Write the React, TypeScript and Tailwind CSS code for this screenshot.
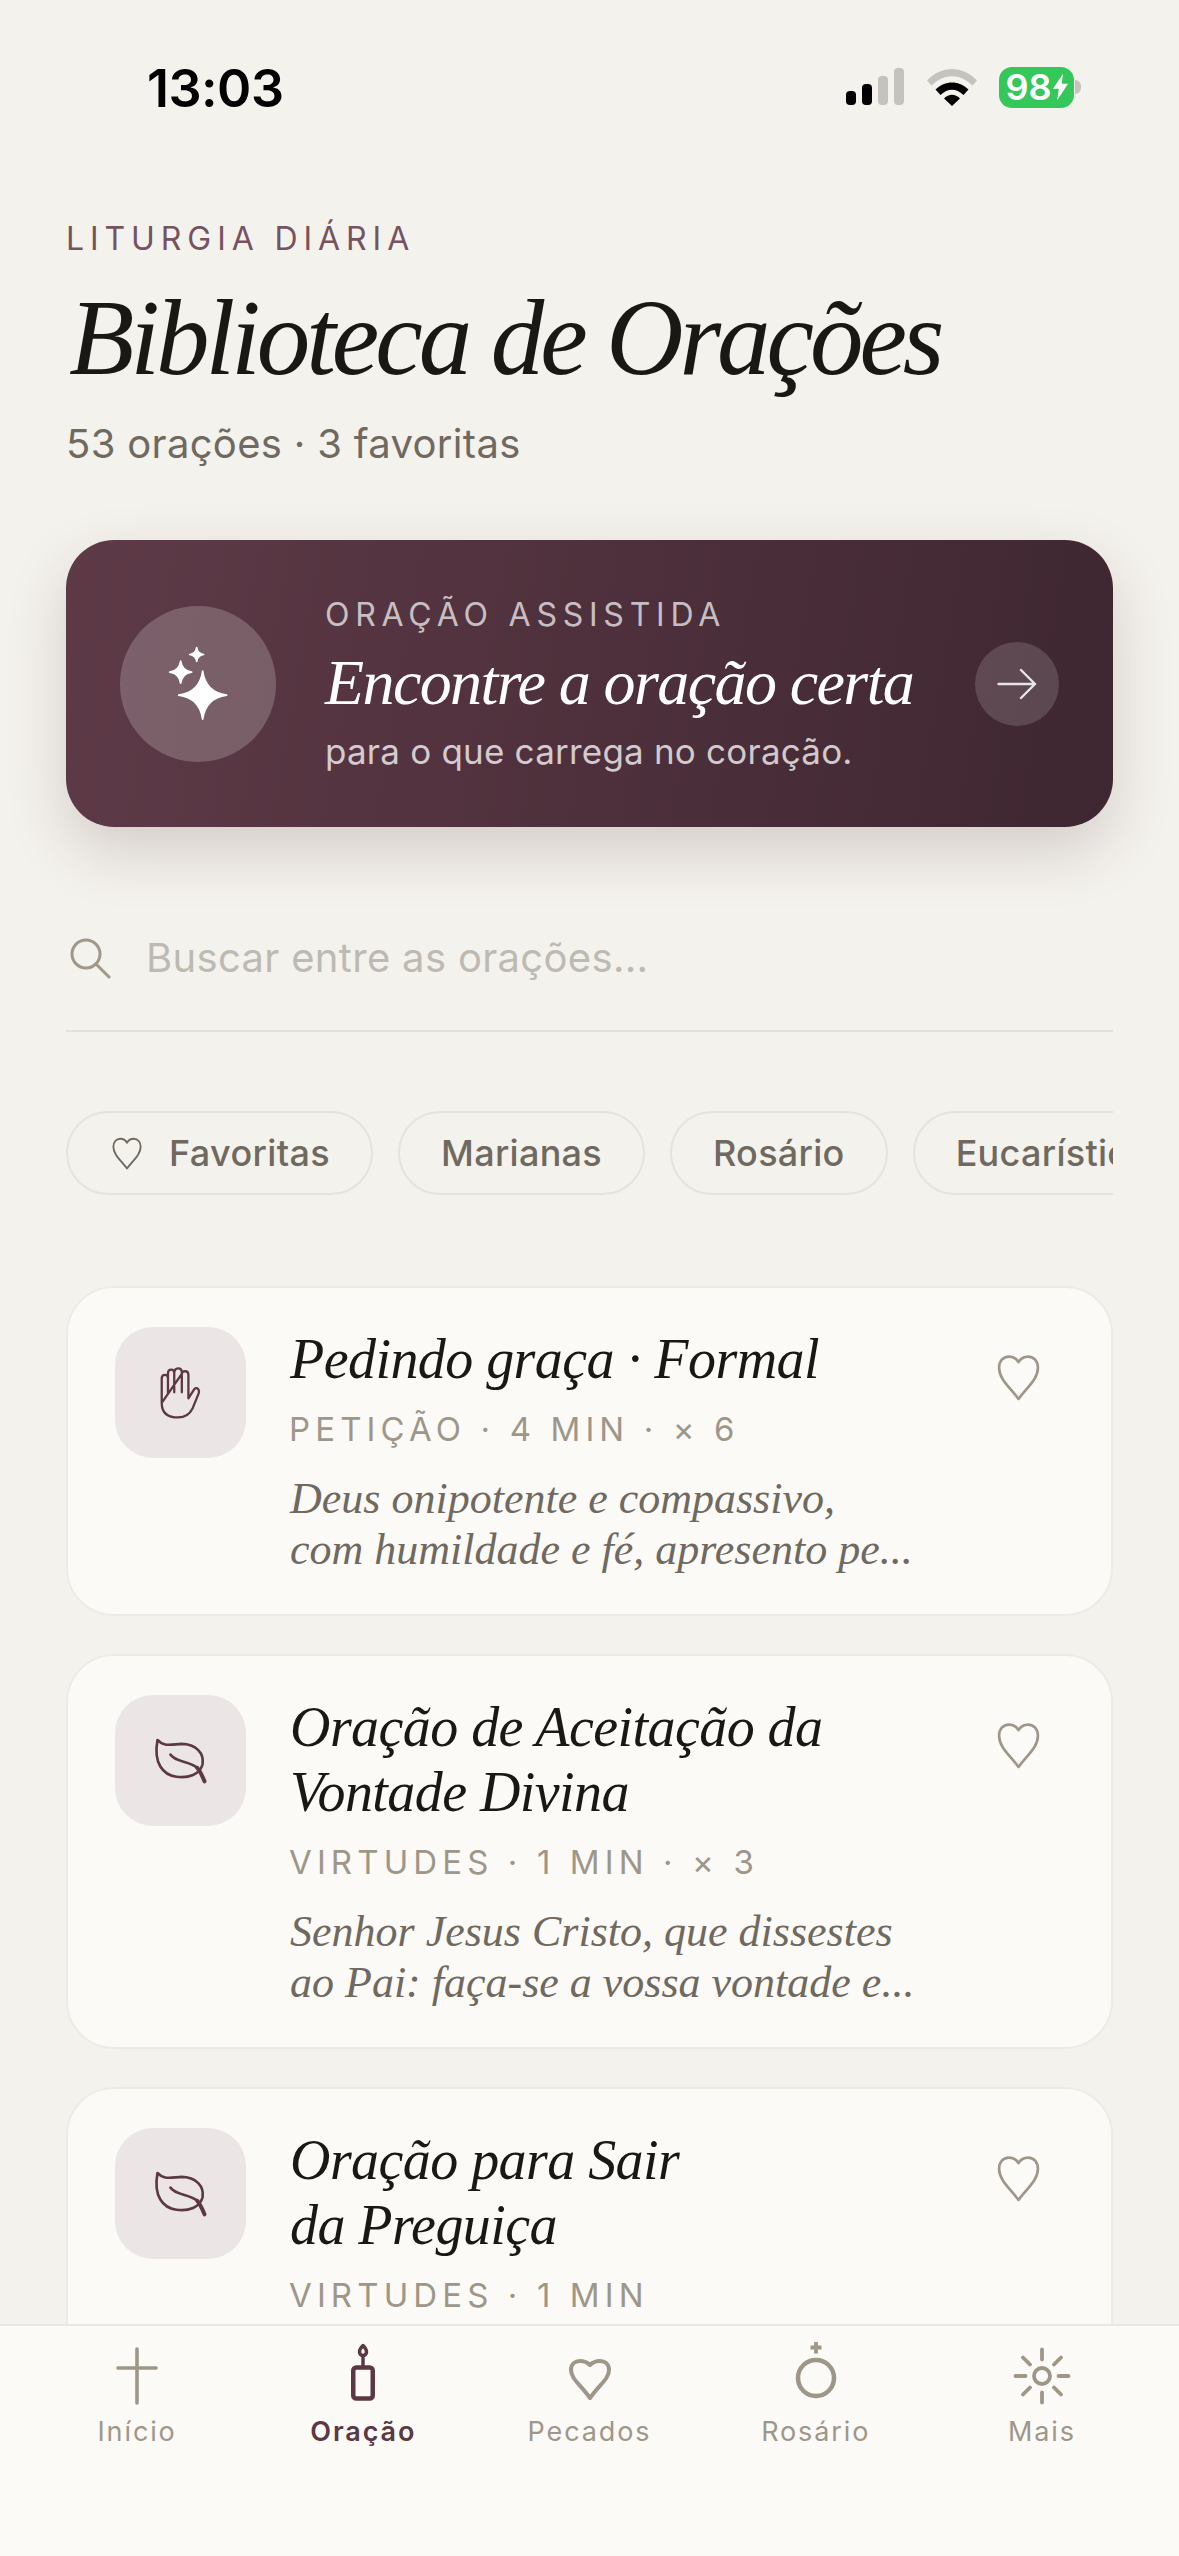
const serif = "font-['Liberation_Serif',serif] italic";

const chips = ["Marianas", "Rosário", "Eucarísticas"];

const prayers = [
  {
    icon: "hand",
    title: ["Pedindo graça · Formal"],
    meta: "PETIÇÃO · 4 MIN · × 6",
    excerpt: ["Deus onipotente e compassivo,", "com humildade e fé, apresento pe..."],
  },
  {
    icon: "leaf",
    title: ["Oração de Aceitação da", "Vontade Divina"],
    meta: "VIRTUDES · 1 MIN · × 3",
    excerpt: ["Senhor Jesus Cristo, que dissestes", "ao Pai: faça-se a vossa vontade e..."],
  },
  {
    icon: "leaf",
    title: ["Oração para Sair", "da Preguiça"],
    meta: "VIRTUDES · 1 MIN",
    excerpt: [],
  },
];

function Heart({ className }: { className?: string }) {
  return (
    <svg viewBox="0 0 44 46" fill="none" stroke="currentColor" strokeWidth="2.600" strokeLinejoin="round" className={className}>
      <path d="M22 44C14 33 3 25 3 13.500C3 7 7 2.500 12.500 2.500C16.500 2.500 20 4.500 22 8C24 4.500 27.500 2.500 31.500 2.500C37 2.500 41 7 41 13.500C41 25 30 33 22 44Z" />
    </svg>
  );
}

function HandIcon() {
  return (
    <svg viewBox="180 165 130 170" width="43" height="56" fill="none" stroke="#5b3844" strokeWidth="7" strokeLinecap="round" strokeLinejoin="round">
      <path d="M188 280V206Q188 195 198 195Q207 195 207 206V250M207 206V190Q207 179 217 179Q226 179 226 190V248M226 190Q226 175 238 175Q249 175 249 188V248M249 192Q249 184 259 184Q269 184 269 195V266L287 238Q294 232 300 240Q303 246 299 254L282 296Q268 324 238 324Q188 324 188 280Z" />
    </svg>
  );
}

function LeafIcon() {
  return (
    <svg viewBox="155 1262 165 148" width="55" height="49" fill="none" stroke="#5b3844" strokeWidth="8" strokeLinecap="round" strokeLinejoin="round">
      <path d="M168 1274C185 1294 205 1288 240 1286C285 1286 310 1315 304 1348C296 1378 262 1390 225 1385C185 1380 155 1345 168 1274Z" />
      <path d="M207 1318C222 1342 262 1336 288 1358" />
      <path d="M288 1358C298 1370 304 1384 310 1399" strokeWidth="12" />
    </svg>
  );
}

function Star({ cx, cy, r }: { cx: number; cy: number; r: number }) {
  const k = r * 0.12;
  return (
    <path
      d={`M${cx} ${cy - r}Q${cx + k} ${cy - k} ${cx + r} ${cy}Q${cx + k} ${cy + k} ${cx} ${cy + r}Q${cx - k} ${cy + k} ${cx - r} ${cy}Q${cx - k} ${cy - k} ${cx} ${cy - r}Z`}
      stroke="white"
      strokeWidth="5"
      strokeLinejoin="round"
      fill="white"
    />
  );
}

function Sparkles() {
  return (
    <svg viewBox="174 149 240 260" width="80" height="87">
      <Star cx={308} cy={314} r={72} />
      <Star cx={242} cy={245} r={33} />
      <Star cx={290} cy={192} r={21} />
    </svg>
  );
}

function StatusBar() {
  return (
    <div className="flex justify-between items-center pl-[147px] pr-[98px] pt-[62px] h-[112px]">
      <span className="font-['Inter',sans-serif] font-semibold text-[52px] leading-none tracking-[-0.01em] text-black mt-[3px]">13:03</span>
      <div className="flex items-center">
        <svg viewBox="0 0 58 38" width="58" height="38" className="mr-[23px]">
          <rect x="0" y="23" width="10" height="14" rx="4" fill="#000" />
          <rect x="16" y="16" width="10" height="21" rx="4" fill="#000" />
          <rect x="32" y="8" width="10" height="29" rx="4" fill="#c5c3be" />
          <rect x="48" y="0" width="10" height="37" rx="4" fill="#c5c3be" />
        </svg>
        <svg viewBox="0 0 50 38" width="50" height="38" className="mr-[22px]">
          <path d="M0 12.500C14 -3 36 -3 50 12.500L45.500 17.500C33 5 17 5 4.500 17.500Z" fill="#c5c3be" />
          <path d="M8.500 21.500C18 12 32 12 41.500 21.500L36.500 27C29 20 21 20 13.500 27Z" fill="#000" />
          <path d="M17 30.500C22 25.500 28 25.500 33 30.500L25 38Z" fill="#000" />
        </svg>
        <div className="flex items-center justify-center gap-[1px] w-[75px] h-[41px] rounded-[13px] bg-[#34c759] text-white font-['Inter',sans-serif] font-semibold text-[36px] leading-none">
          98
          <svg viewBox="0 0 18 32" width="15" height="30" fill="white">
            <path d="M12 0L0 18H7L5 32L18 12H10.500Z" />
          </svg>
        </div>
        <div className="w-[6px] h-[14px] ml-[1px] rounded-r-full bg-[#c5c3be]" />
      </div>
    </div>
  );
}

function PrayerCard({ item }: { item: (typeof prayers)[number] }) {
  return (
    <div className={`flex items-start gap-[44px] bg-[#fbfaf7] border-2 border-[#eeebe6] rounded-[48px] pl-[47px] pr-[70px] pt-[39px] pb-[39px] ${item.excerpt.length === 0 ? "min-h-[393px]" : ""}`}>
      <div className="flex items-center justify-center shrink-0 w-[131px] h-[131px] rounded-[38px] bg-[#ebe6e5]">
        {item.icon === "hand" ? <HandIcon /> : <LeafIcon />}
      </div>
      <div className="flex-1 min-w-0">
        <h3 className={`${serif} font-normal text-[56px] leading-[65px] text-[#1a1815] tracking-[-0.01em]`}>
          {item.title.map((line) => (
            <span key={line} className="block whitespace-nowrap">{line}</span>
          ))}
        </h3>
        <p className="font-['Inter',sans-serif] text-[33px] leading-[40px] tracking-[0.155em] text-[#9e9789] -ml-[1px] mt-[17px] whitespace-nowrap">{item.meta}</p>
        {item.excerpt.length > 0 && (
          <p className={`${serif} text-[44px] leading-[51px] text-[#6f695f] mt-[24px]`}>
            {item.excerpt.map((line) => (
              <span key={line} className="block whitespace-nowrap">{line}</span>
            ))}
          </p>
        )}
      </div>
      <Heart className="shrink-0 w-[45px] h-[47px] mt-[27px] text-[#9e9789]" />
    </div>
  );
}

const navItems = [
  {
    label: "Início",
    icon: (
      <g strokeWidth="3.600">
        <path d="M40 11V65" />
        <path d="M21 30H59" />
      </g>
    ),
  },
  {
    label: "Oração",
    active: true,
    icon: (
      <g strokeWidth="4.500">
        <rect x="30.250" y="29.500" width="19.500" height="31" rx="3" />
        <path d="M40 20V28" strokeWidth="3.500" />
        <path d="M40 7.500C37.500 10 36.500 12 36.500 14C36.500 16 38 17.500 40 17.500C42 17.500 43.500 16 43.500 14C43.500 12 42.500 10 40 7.500Z" strokeWidth="3.500" />
      </g>
    ),
  },
  {
    label: "Pecados",
    icon: (
      <path strokeWidth="4" d="M40 60C31 47 21 41 21 32C21 26 25 23 30 23C35 23 38 25 40 27C42 25 45 23 50 23C55 23 59 26 59 32C59 41 49 47 40 60Z" />
    ),
  },
  {
    label: "Rosário",
    icon: (
      <g strokeWidth="4.500">
        <circle cx="40" cy="40" r="18" />
        <path d="M40 4V15.500M34.500 9.500H45.500" strokeWidth="3.800" strokeLinecap="butt" />
      </g>
    ),
  },
  {
    label: "Mais",
    icon: (
      <g strokeWidth="3.800">
        <circle cx="40" cy="38" r="8" />
        <path d="M40 11.500V21.500M40 54.500V64.500M13.500 38H23.500M56.500 38H66.500M21 19.500L28 26.500M59 19.500L52 26.500M21 56.500L28 49.500M59 56.500L52 49.500" />
      </g>
    ),
  },
];

function BottomNav() {
  return (
    <nav className="shrink-0 h-[232px] bg-[#fbfaf7] border-t-2 border-[#ebe8e3] flex px-[24px] pt-[12px] items-start">
      {navItems.map((item) => (
        <div key={item.label} className={`flex-1 flex flex-col items-center ${item.active ? "text-[#5b3844]" : "text-[#9e9789]"}`}>
          <svg viewBox="0 0 80 72" width="80" height="72" fill="none" stroke="currentColor" strokeLinecap="round" strokeLinejoin="round">
            {item.icon}
          </svg>
          <span className={`font-['Inter',sans-serif] text-[27px] leading-[32px] tracking-[0.07em] mt-[6px] ${item.active ? "font-semibold" : "font-normal"}`}>{item.label}</span>
        </div>
      ))}
    </nav>
  );
}

export default function App() {
  return (
    <div className="w-[1179px] h-[2556px] flex flex-col overflow-hidden bg-[#f4f2ed]">
      <div className="flex-1 min-h-0 overflow-hidden">
        <StatusBar />

        <div className="px-[66px]">
          <p className="font-['Inter',sans-serif] text-[32px] leading-[40px] tracking-[0.185em] text-[#75535f] mt-[107px]">LITURGIA DIÁRIA</p>
          <h1 className={`${serif} font-normal text-[107px] leading-[110px] text-[#1a1815] tracking-[-0.038em] mt-[24px] ml-[3px]`}>Biblioteca de Orações</h1>
          <p className="font-['Inter',sans-serif] text-[40px] leading-[48px] tracking-[0.008em] text-[#6f695f] mt-[27px]">53 orações · 3 favoritas</p>

          {/* Oração assistida */}
          <div className="flex items-center h-[287px] mt-[72px] pl-[54px] pr-[54px] rounded-[48px] bg-[linear-gradient(100deg,#5e3a47,#3e2731)] shadow-[0_24px_60px_rgba(70,40,50,0.18)]">
            <div className="flex items-center justify-center shrink-0 w-[156px] h-[156px] rounded-full bg-white/20">
              <Sparkles />
            </div>
            <div className="flex-1 min-w-0 ml-[49px]">
              <p className="font-['Inter',sans-serif] text-[32px] leading-[40px] tracking-[0.18em] text-white/70">ORAÇÃO ASSISTIDA</p>
              <p className={`${serif} text-[64px] leading-[68px] tracking-[-0.025em] text-white mt-[14px] whitespace-nowrap`}>Encontre a oração certa</p>
              <p className="font-['Inter',sans-serif] text-[35px] leading-[42px] tracking-[0.006em] text-white/75 mt-[13px]">para o que carrega no coração.</p>
            </div>
            <div className="flex items-center justify-center shrink-0 w-[84px] h-[84px] rounded-full bg-white/15">
              <svg viewBox="0 0 40 32" width="40" height="32" fill="none" stroke="currentColor" strokeWidth="2.400" strokeLinecap="round" strokeLinejoin="round" className="text-white/85">
                <path d="M1.500 16H38M24 2L38 16L24 30" />
              </svg>
            </div>
          </div>

          {/* Busca */}
          <div className="flex items-center h-[205px] border-b-2 border-[#e4e1db]">
            <svg viewBox="0 0 42 42" width="42" height="42" fill="none" stroke="#a09888" strokeWidth="3" strokeLinecap="round" className="shrink-0 mt-[58px] ml-[3px]">
              <circle cx="17" cy="17" r="14" />
              <path d="M27 27L40 40" />
            </svg>
            <span className="font-['Inter',sans-serif] text-[40px] tracking-[0.008em] text-[#bdbab3] ml-[35px] mt-[58px]">Buscar entre as orações...</span>
          </div>

          {/* Filtros */}
          <div className="flex gap-[25px] overflow-hidden mt-[79px]">
            <div className="flex items-center gap-[24px] shrink-0 h-[84px] px-[41px] rounded-full border-2 border-[#e6e3dd] text-[#6f695f]">
              <Heart className="w-[36px] h-[33px]" />
              <span className="font-['Inter',sans-serif] font-medium text-[36px] tracking-[0.01em]">Favoritas</span>
            </div>
            {chips.map((chip) => (
              <div key={chip} className="flex items-center shrink-0 h-[84px] px-[41px] rounded-full border-2 border-[#e6e3dd] text-[#6f695f]">
                <span className="font-['Inter',sans-serif] font-medium text-[36px] tracking-[0.008em]">{chip}</span>
              </div>
            ))}
          </div>

          <div className="flex flex-col gap-[38px] mt-[91px]">
            {prayers.map((item) => (
              <PrayerCard key={item.title[0]} item={item} />
            ))}
          </div>
        </div>
      </div>

      <BottomNav />
    </div>
  );
}
